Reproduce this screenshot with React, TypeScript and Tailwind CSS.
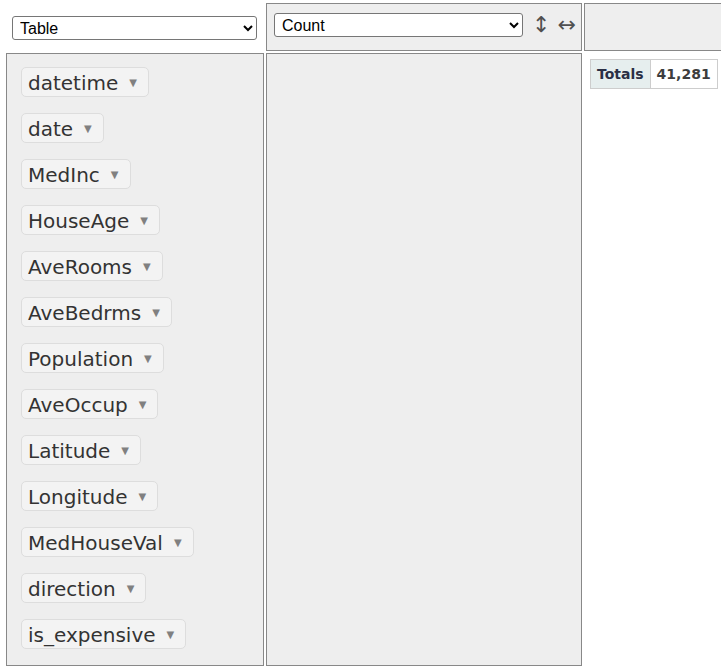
import React from "react";

const attrs = [
  "datetime",
  "date",
  "MedInc",
  "HouseAge",
  "AveRooms",
  "AveBedrms",
  "Population",
  "AveOccup",
  "Latitude",
  "Longitude",
  "MedHouseVal",
  "direction",
  "is_expensive",
];

function Attr({ name }: { name: string }) {
  return (
    <div className="inline-flex items-center rounded-[5px] border border-[#dddddd] bg-[#f3f3f3] pl-[6px] pr-[5px] pt-[3px] pb-[1px] text-[20px] leading-[24px] text-[#333333] whitespace-nowrap">
      <span>{name}</span>
      <span className="ml-[11px] mr-[6px] text-[10px] leading-[24px] text-[#808080]">▼</span>
    </div>
  );
}

export default function App() {
  return (
    <div className="w-[721px] h-[667px] overflow-hidden bg-white font-['DejaVu_Sans',Verdana,sans-serif]">
      <div className="grid grid-cols-[258px_316px_1fr] grid-rows-[48px_613px] gap-[2px] pl-[6px] pt-[3px]">
        {/* renderer picker */}
        <div className="pl-[6px] pt-[13px]">
          <select
            defaultValue="Table"
            className="w-[245px] h-[24px] border border-[#767676] rounded-[3px] bg-white pl-[3px] text-[16px] text-black font-['Liberation_Sans',Arial,sans-serif]"
          >
            <option>Table</option>
            <option>Table Heatmap</option>
            <option>Bar Chart</option>
          </select>
        </div>

        {/* aggregator */}
        <div className="flex items-start border border-[#888888] bg-[#eeeeee] pl-[7px] pt-[9px]">
          <select
            defaultValue="Count"
            className="w-[249px] h-[24px] border border-[#767676] rounded-[3px] bg-white pl-[3px] text-[16px] text-black font-['Liberation_Sans',Arial,sans-serif]"
          >
            <option>Count</option>
            <option>Sum</option>
            <option>Average</option>
          </select>
          <span className="ml-[9px] -mt-[1px] text-[22px] leading-[26px] text-[#505050]">↕</span>
          <span className="ml-[7px] -mt-[1px] text-[22px] leading-[26px] text-[#505050]">↔</span>
        </div>

        {/* column axis */}
        <div className="border border-[#888888] border-r-0 bg-[#eeeeee]" />

        {/* unused attributes */}
        <div className="flex flex-col items-start gap-[16px] border border-[#888888] bg-[#eeeeee] pl-[14px] pt-[13px]">
          {attrs.map((a) => (
            <Attr key={a} name={a} />
          ))}
        </div>

        {/* row axis */}
        <div className="border border-[#888888] bg-[#eeeeee]" />

        {/* output */}
        <div className="pl-[6px] pt-[6px]">
          <table className="border-collapse text-[14px] font-bold">
            <tbody>
              <tr>
                <th className="border border-[#cdcdcd] bg-[#e6eeee] px-[6px] py-[5px] leading-[18px] text-left text-[#2a2f45]">Totals</th>
                <td className="border border-[#cdcdcd] bg-white px-[6px] py-[5px] leading-[18px] text-right text-[#3d3d3d]">41,281</td>
              </tr>
            </tbody>
          </table>
        </div>
      </div>
    </div>
  );
}
